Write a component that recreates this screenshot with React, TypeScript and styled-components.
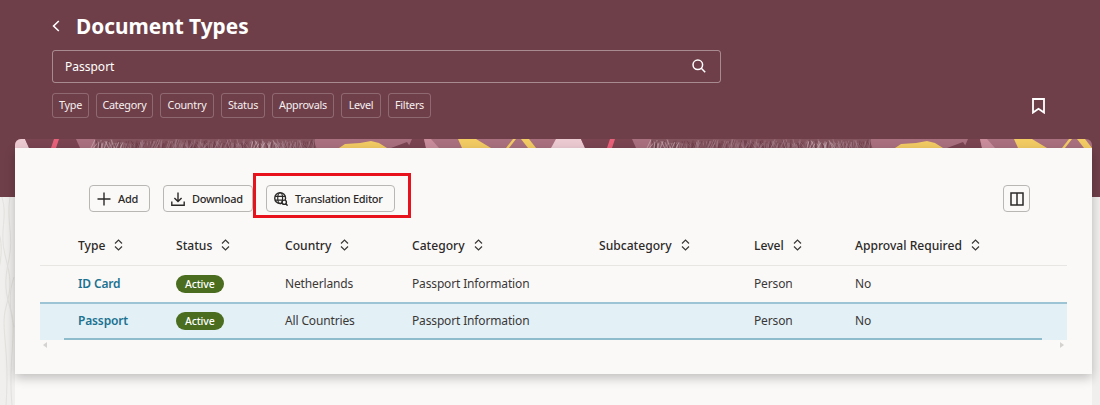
import React from "react";
import styled, { createGlobalStyle } from "styled-components";

const GlobalStyle = createGlobalStyle`
  html, body {
    margin: 0;
    padding: 0;
    background: #f0efed;
  }
  body {
    font-family: "Noto Sans", "Liberation Sans", sans-serif;
    color: #3a3836;
  }
`;

const FILTERS = [
  { label: "Type", width: 37 },
  { label: "Category", width: 57 },
  { label: "Country", width: 54 },
  { label: "Status", width: 44 },
  { label: "Approvals", width: 62 },
  { label: "Level", width: 40 },
  { label: "Filters", width: 43 },
];

const COLUMNS = [
  "Type",
  "Status",
  "Country",
  "Category",
  "Subcategory",
  "Level",
  "Approval Required",
];

const ROWS = [
  { type: "ID Card", country: "Netherlands", category: "Passport Information", selected: false },
  { type: "Passport", country: "All Countries", category: "Passport Information", selected: true },
];

// fine contour marks for the grey part of the banner
const seeded = (n: number) => {
  const v = Math.sin(n * 12.9898) * 43758.5453;
  return v - Math.floor(v);
};

const TEXTURE = Array.from({ length: 220 }, (_, i) => {
  const x = 80 + i;
  const lean = (seeded(i) - 0.5) * 8;
  const y = seeded(i + 300) * 5;
  const bright = (x > 236 && x < 262 && i % 2 === 0) || (x < 110 && i % 2 === 0);
  const dark = seeded(i + 700) > 0.55;
  return { x, lean, y, colour: bright ? "#d3bcc3" : dark ? "#683945" : "#a8838e" };
});

const BannerTile: React.FC<{ offset: number }> = ({ offset }) => (
  <g transform={`translate(${offset} 0)`}>
    <rect x={-20} width={576} height={9} fill="#a9707f" />
    <polygon points="-20,9 -15,0 10,0 14,9" fill="#eccad2" />
    <polygon points="10,0 61,0 65,9 14,9" fill="#7a4451" />
    <polygon points="39,0 44,0 41,9 36,9" fill="#e9607a" />
    <rect x={80} width={220} height={9} fill="#85555f" />
    {TEXTURE.map((m, i) => (
      <line key={i} x1={m.x} y1={m.y} x2={m.x + m.lean} y2={9} stroke={m.colour} strokeWidth={0.6} />
    ))}
    <polygon points="324,9 330,5 345,4 356,2 364,4 372,9" fill="#f2cb63" />
    <polygon points="376,9 392,3 396,9" fill="#7a4451" />
    <polygon points="397,0 409,0 411,9 393,9" fill="#7a4451" />
    <polygon points="409,0 416,0 424,9 411,9" fill="#c98d9c" />
    <polygon points="443,0 461,0 476,9 447,9" fill="#f2cb63" />
    <polygon points="498,0 501,0 494,9 491,9" fill="#f2cb63" />
    <polygon points="506,0 514,0 521,9 513,9" fill="#f2cb63" />
  </g>
);

const SortIcon = () => (
  <svg width="9" height="12" viewBox="0 0 9 12" fill="none" stroke="#3a3836" strokeWidth="1.2">
    <path d="M1 4.5 4.5 1 8 4.5" />
    <path d="M1 7.5 4.5 11 8 7.5" />
  </svg>
);

const PlusIcon = () => (
  <svg width="14" height="14" viewBox="0 0 14 14" stroke="#2c2a28" strokeWidth="1.4">
    <path d="M7 0.5v13M0.5 7h13" />
  </svg>
);

const DownloadIcon = () => (
  <svg width="14" height="14" viewBox="0 0 14 14" fill="none" stroke="#2c2a28" strokeWidth="1.4">
    <path d="M7 0.5v9M3.4 6l3.6 3.6L10.6 6" />
    <path d="M0.8 9.4v3.8h12.4V9.4" />
  </svg>
);

const GlobeSearchIcon = () => (
  <svg width="14" height="14" viewBox="0 0 15 15" fill="none" stroke="#2c2a28" strokeWidth="1.3">
    <circle cx="6.6" cy="6.6" r="5.8" strokeWidth="1.5" />
    <ellipse cx="6.6" cy="6.6" rx="2.6" ry="5.8" />
    <path d="M1.2 4.6h10.8M1.2 8.6h8" />
    <circle cx="11" cy="11" r="2.3" fill="#fbf9f8" strokeWidth="1.5" />
    <path d="M12.6 12.6 14.6 14.6" strokeWidth="1.6" />
  </svg>
);

const ColumnsIcon = () => (
  <svg width="14" height="14" viewBox="0 0 14 14" fill="none" stroke="#2c2a28" strokeWidth="1.5">
    <rect x="1" y="1" width="12" height="12" />
    <path d="M7 1v12" />
  </svg>
);

const App: React.FC = () => (
  <Page>
    <GlobalStyle />
    <Contours viewBox="0 0 15 208" width="15" height="208" fill="none" stroke="#e2e1de">
      <path d="M2 0c6 20-3 34 3 58s7 30 1 52 4 40 0 98" />
      <path d="M10 0c-4 24 4 38-1 62s-4 32 2 52-3 50 1 94" />
      <path d="M-3 30c6 14 5 30 1 46M14 80c-6 16-4 34 0 50" />
    </Contours>
    <Header>
      <TitleRow>
        <svg width="8" height="12" viewBox="0 0 8 12" fill="none" stroke="#fff" strokeWidth="1.6">
          <path d="M6.8 1 1.6 6l5.2 5" />
        </svg>
        <Title>Document Types</Title>
      </TitleRow>
      <SearchBox>
        <span>Passport</span>
        <svg width="14" height="14" viewBox="0 0 14 14" fill="none" stroke="#fff" strokeWidth="1.5">
          <circle cx="5.8" cy="5.8" r="4.8" />
          <path d="M9.3 9.3 13.2 13.2" />
        </svg>
      </SearchBox>
      <FilterRow>
        {FILTERS.map((f) => (
          <Chip key={f.label} $width={f.width}>
            {f.label}
          </Chip>
        ))}
        <Bookmark width="13" height="16" viewBox="0 0 13 16" fill="none" stroke="#fff" strokeWidth="1.8">
          <path d="M1 1h11v13.6L6.5 10.8 1 14.6z" />
        </Bookmark>
      </FilterRow>
    </Header>
    <Main>
      <Banner width="1077" height="9" viewBox="0 0 1077 9">
        <BannerTile offset={0} />
        <BannerTile offset={556} />
      </Banner>
      <Card>
        <Toolbar>
          <ToolButton $width={61}>
            <PlusIcon />
            Add
          </ToolButton>
          <ToolButton $width={90}>
            <DownloadIcon />
            Download
          </ToolButton>
          <Highlighted>
            <ToolButton $width={129}>
              <GlobeSearchIcon />
              Translation Editor
            </ToolButton>
            <RedBox />
          </Highlighted>
          <IconButton>
            <ColumnsIcon />
          </IconButton>
        </Toolbar>
        <Table>
          <HeaderRow>
            {COLUMNS.map((c) => (
              <HeaderCell key={c}>
                {c}
                <SortIcon />
              </HeaderCell>
            ))}
          </HeaderRow>
          {ROWS.map((r) => (
            <Row key={r.type} $selected={r.selected}>
              <TypeLink>{r.type}</TypeLink>
              <div>
                <Pill>Active</Pill>
              </div>
              <div>{r.country}</div>
              <div>{r.category}</div>
              <div />
              <div>Person</div>
              <div>No</div>
            </Row>
          ))}
          <ScrollBar>
            <Arrow />
            <Arrow $right />
          </ScrollBar>
        </Table>
      </Card>
      <Below />
    </Main>
  </Page>
);

export default App;

const Page = styled.div`
  position: relative;
  width: 1100px;
  height: 405px;
  overflow: hidden;
`;

const Contours = styled.svg`
  position: absolute;
  left: 0;
  top: 197px;
`;

const Header = styled.header`
  position: relative;
  box-sizing: border-box;
  height: 197px;
  padding: 11px 55px 0 52px;
  background: #6f3f49;
  color: #fff;
`;

const TitleRow = styled.div`
  display: flex;
  align-items: center;
  gap: 16px;
  height: 30px;
`;

const Title = styled.h1`
  margin: 0;
  font-size: 20.8px;
  font-weight: 700;
  line-height: 30px;
`;

const SearchBox = styled.div`
  display: flex;
  align-items: center;
  justify-content: space-between;
  box-sizing: border-box;
  width: 669px;
  height: 33px;
  margin-top: 9px;
  padding: 0 14px 1px 12px;
  border: 1px solid rgba(255, 255, 255, 0.4);
  border-radius: 3px;
  font-size: 12px;
`;

const FilterRow = styled.div`
  display: flex;
  align-items: center;
  gap: 7px;
  margin-top: 10px;
`;

const Chip = styled.div<{ $width: number }>`
  box-sizing: border-box;
  width: ${(p) => p.$width}px;
  height: 25px;
  border: 1px solid rgba(255, 255, 255, 0.22);
  border-radius: 3px;
  font-size: 10.8px;
  letter-spacing: -0.25px;
  line-height: 22px;
  text-align: center;
  color: #f6eff0;
`;

const Bookmark = styled.svg`
  margin-left: auto;
`;

const Main = styled.main`
  position: relative;
  margin: -58px 8px 0 15px;
`;

const Banner = styled.svg`
  display: block;
  border-radius: 6px 6px 0 0;
`;

const Card = styled.section`
  position: relative;
  box-sizing: border-box;
  height: 226px;
  background: #fbf9f8;
  box-shadow: 0 4px 10px rgba(0, 0, 0, 0.24);
`;

const Below = styled.div`
  height: 40px;
  background: #fbf9f8;
`;

const Toolbar = styled.div`
  display: flex;
  align-items: center;
  gap: 13px;
  padding: 37px 62px 0 74px;
`;

const ToolButton = styled.button<{ $width: number }>`
  display: flex;
  align-items: center;
  gap: 7px;
  box-sizing: border-box;
  width: ${(p) => p.$width}px;
  height: 27px;
  padding: 0 0 0 7px;
  background: #fbf9f8;
  border: 1px solid #b9b7b3;
  border-radius: 4px;
  font-family: inherit;
  font-size: 11px;
  font-weight: 500;
  letter-spacing: -0.3px;
  color: #2c2a28;
`;

const Highlighted = styled.div`
  position: relative;
  display: flex;
`;

const RedBox = styled.div`
  position: absolute;
  top: -12px;
  right: -16px;
  bottom: -6px;
  left: -13px;
  border: 3px solid #e8121c;
  pointer-events: none;
`;

const IconButton = styled.button`
  display: flex;
  align-items: center;
  justify-content: center;
  width: 27px;
  height: 27px;
  margin-left: auto;
  padding: 0;
  background: #fbf9f8;
  border: 1px solid #b9b7b3;
  border-radius: 4px;
`;

const Table = styled.div`
  margin: 20px 25px 0;
  font-size: 12px;
  letter-spacing: -0.15px;
`;

const rowGrid = `
  display: grid;
  grid-template-columns: 136px 109px 127px 187px 155px 101px 1fr;
  align-items: center;
  box-sizing: border-box;
`;

const HeaderRow = styled.div`
  ${rowGrid}
  height: 34px;
  padding-bottom: 7px;
  border-bottom: 1px solid #e8e6e3;
`;

const HeaderCell = styled.div`
  display: flex;
  align-items: center;
  gap: 9px;
  font-size: 12.1px;
  font-weight: 500;
  letter-spacing: 0;
  color: #2c2a28;

  &:first-child {
    padding-left: 38px;
  }
`;

const Row = styled.div<{ $selected: boolean }>`
  ${rowGrid}
  position: relative;
  height: ${(p) => (p.$selected ? "38px" : "36px")};
  padding-bottom: ${(p) => (p.$selected ? "3px" : "1px")};
  background: ${(p) => (p.$selected ? "#e3f0f6" : "transparent")};
  border-top: ${(p) => (p.$selected ? "2px solid #9cc4d4" : "none")};

  ${(p) =>
    p.$selected &&
    `
      &::after {
        content: "";
        position: absolute;
        left: 24px;
        right: 25px;
        bottom: 0;
        height: 2px;
        background: #8fbccd;
      }
    `}
`;

const TypeLink = styled.div`
  padding-left: 38px;
  font-weight: 600;
  color: #1b7291;
`;

const Pill = styled.span`
  display: inline-block;
  height: 18px;
  padding: 0 9px;
  border-radius: 9px;
  background: #4a6d1f;
  color: #fff;
  font-size: 10.5px;
  font-weight: 500;
  line-height: 18px;
`;

const ScrollBar = styled.div`
  display: flex;
  justify-content: space-between;
  padding: 2px 3px 0;
`;

const Arrow = styled.i<{ $right?: boolean }>`
  width: 0;
  height: 0;
  border-top: 3px solid transparent;
  border-bottom: 3px solid transparent;
  ${(p) => (p.$right ? "border-left: 4px solid #d5d3d0;" : "border-right: 4px solid #d5d3d0;")}
`;
